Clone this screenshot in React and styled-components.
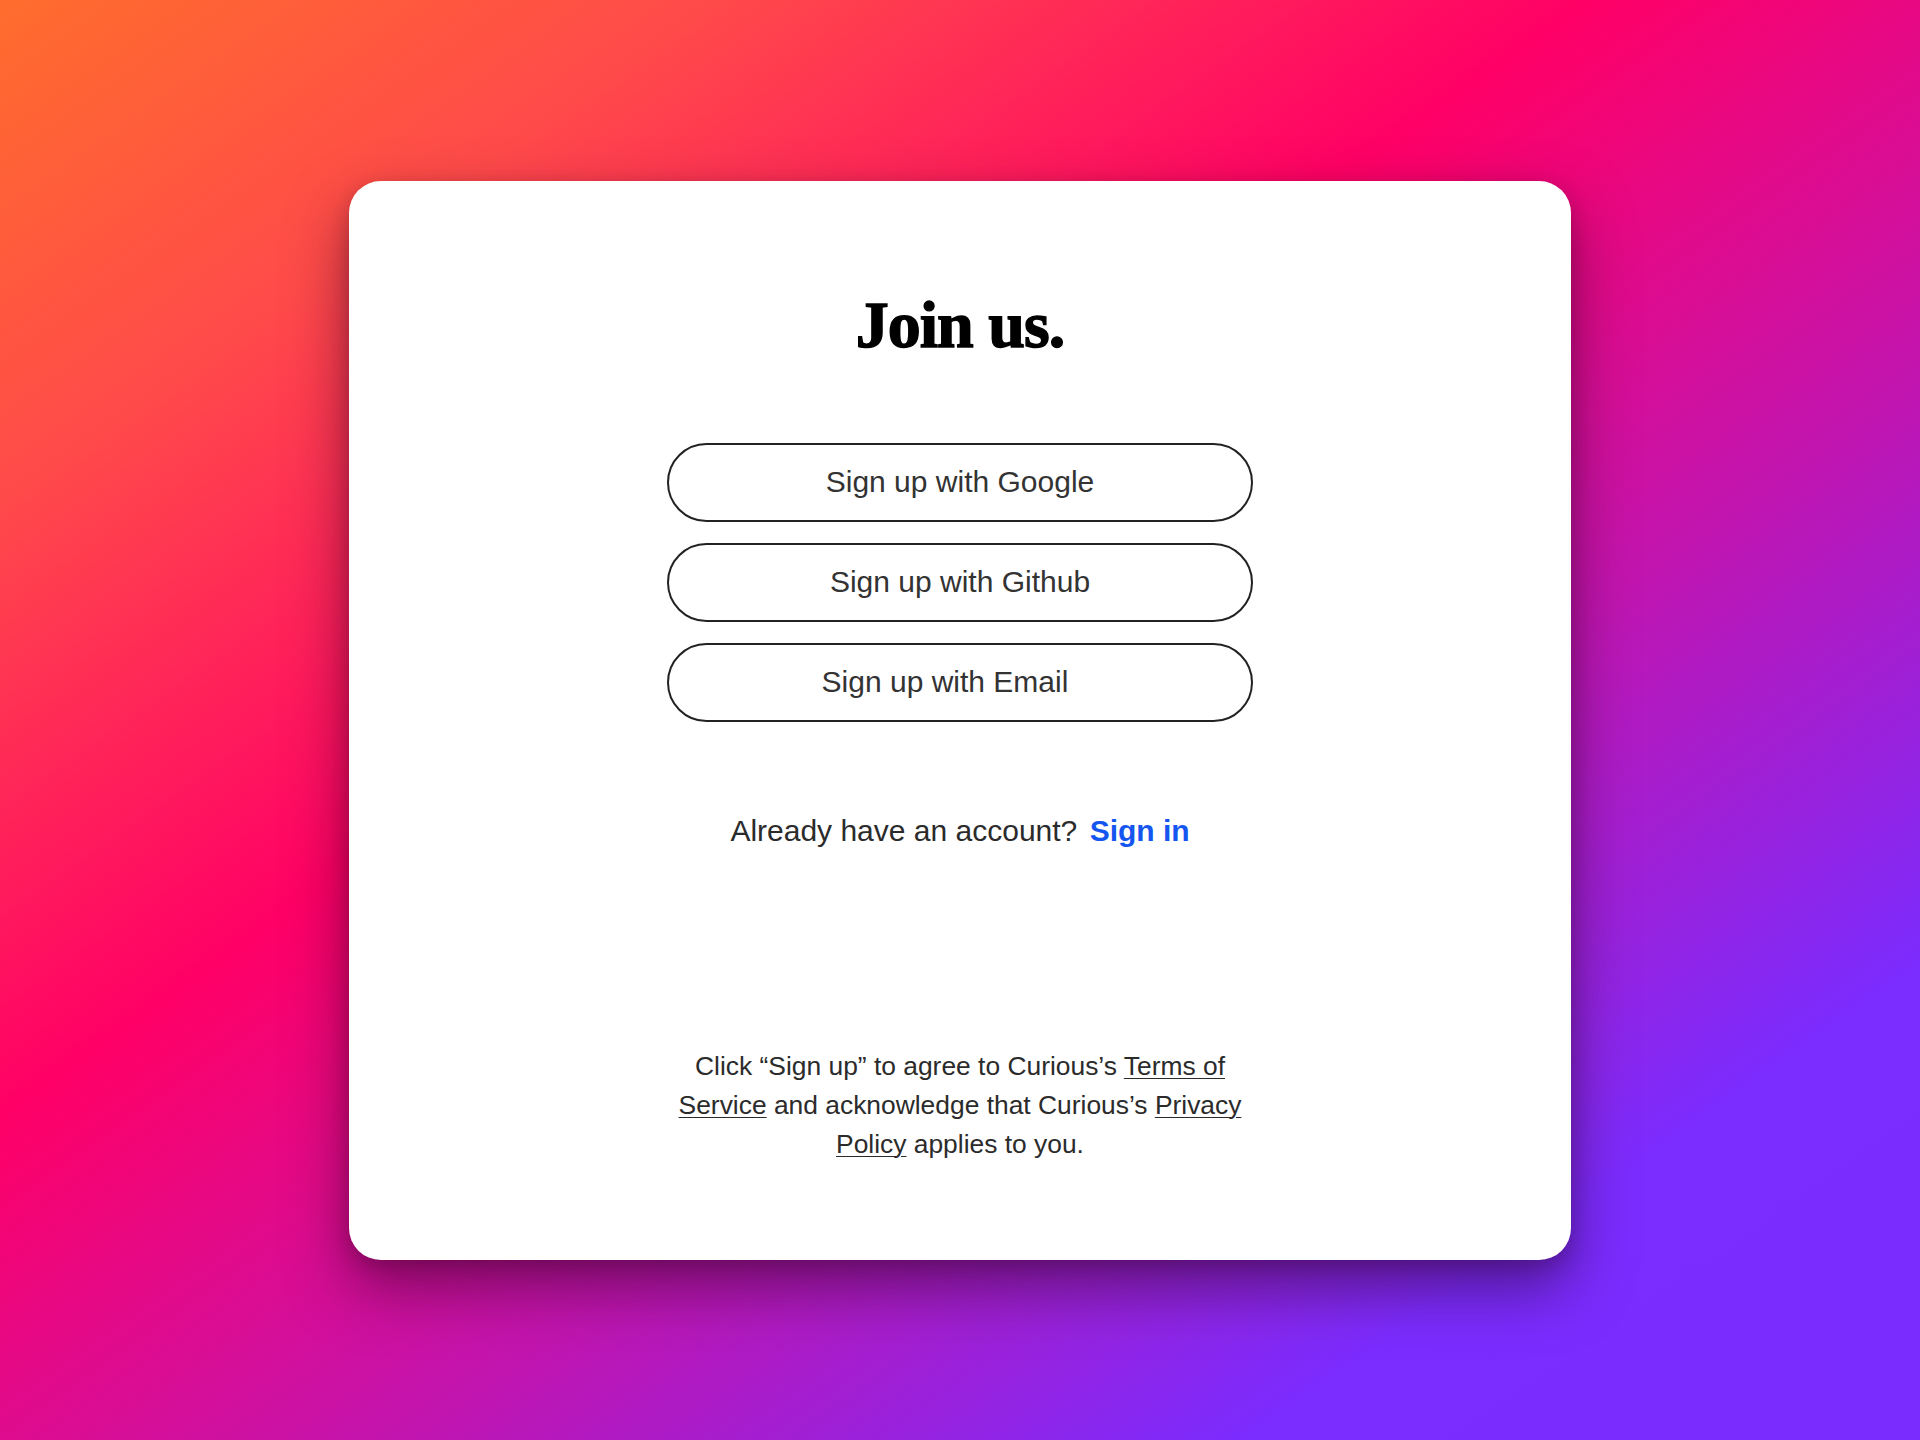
import React from 'react';
import styled, { createGlobalStyle } from 'styled-components';

const GlobalStyle = createGlobalStyle`
  * {
    box-sizing: border-box;
  }
  html, body {
    margin: 0;
    padding: 0;
  }
  body {
    font-family: "Liberation Sans", Arial, sans-serif;
    -webkit-font-smoothing: antialiased;
  }
`;

// shift nudges the label off center, as the email one is in the mockup
const buttons = [
  { label: 'Sign up with Google', shift: 0 },
  { label: 'Sign up with Github', shift: 0 },
  { label: 'Sign up with Email', shift: 30 },
];

const App = () => {
  return (
    <>
      <GlobalStyle />
      <Page>
        <Card>
          <Title>Join us.</Title>

          <ButtonList>
            {buttons.map(b => (
              <OutlineButton key={b.label} type="button" $shift={b.shift}>{b.label}</OutlineButton>
            ))}
          </ButtonList>

          <SignInRow>
            Already have an account? <SignInLink href="#">Sign in</SignInLink>
          </SignInRow>

          <Legal>
            Click “Sign up” to agree to Curious’s <LegalLink href="#">Terms of Service</LegalLink> and
            acknowledge that Curious’s <LegalLink href="#">Privacy Policy</LegalLink> applies to you.
          </Legal>
        </Card>
      </Page>
    </>
  );
};

// styled components

const Page = styled.div`
  min-height: 100vh;
  display: flex;
  align-items: center;
  justify-content: center;
  background: linear-gradient(145deg, #ff6d2d 0%, #ff4a4a 18%, #ff0066 40%, #c115b0 62%, #7b2cff 83%, #7a2cff 100%);
`;

const Card = styled.div`
  width: 1222px;
  height: 1079px;
  background: #fff;
  border-radius: 32px;
  box-shadow: 0 28px 60px rgba(40, 0, 30, 0.5), 0 6px 18px rgba(40, 0, 30, 0.2);
  display: flex;
  flex-direction: column;
  align-items: center;
  padding: 111px 0 96px;
`;

const Title = styled.h1`
  margin: 0;
  font-family: "Liberation Serif", "Times New Roman", serif;
  font-size: 66px;
  line-height: 66px;
  font-weight: 700;
  color: #000;
  letter-spacing: -1px;
  -webkit-text-stroke: 1.4px #000;
`;

const ButtonList = styled.div`
  display: flex;
  flex-direction: column;
  gap: 21px;
  margin-top: 85px;
`;

const OutlineButton = styled.button`
  width: 586px;
  height: 79px;
  border: 2px solid #222;
  border-radius: 40px;
  background: #fff;
  font-family: "Liberation Sans", Arial, sans-serif;
  font-size: 30px;
  color: #333;
  cursor: pointer;
  padding: 0 ${props => props.$shift}px 0 0;
`;

const SignInRow = styled.p`
  margin: 91px 0 0;
  font-size: 30px;
  line-height: 36px;
  color: #2b2b2b;
`;

const SignInLink = styled.a`
  color: #1556f0;
  font-weight: 700;
  text-decoration: none;
  margin-left: 4px;
`;

const Legal = styled.p`
  margin: auto 0 0;
  width: 586px;
  text-align: center;
  font-size: 26.4px;
  line-height: 39px;
  color: #2b2b2b;
`;

const LegalLink = styled.a`
  color: inherit;
  text-decoration: underline;
  text-underline-offset: 3px;
  text-decoration-thickness: 1px;
`;

export default App;
